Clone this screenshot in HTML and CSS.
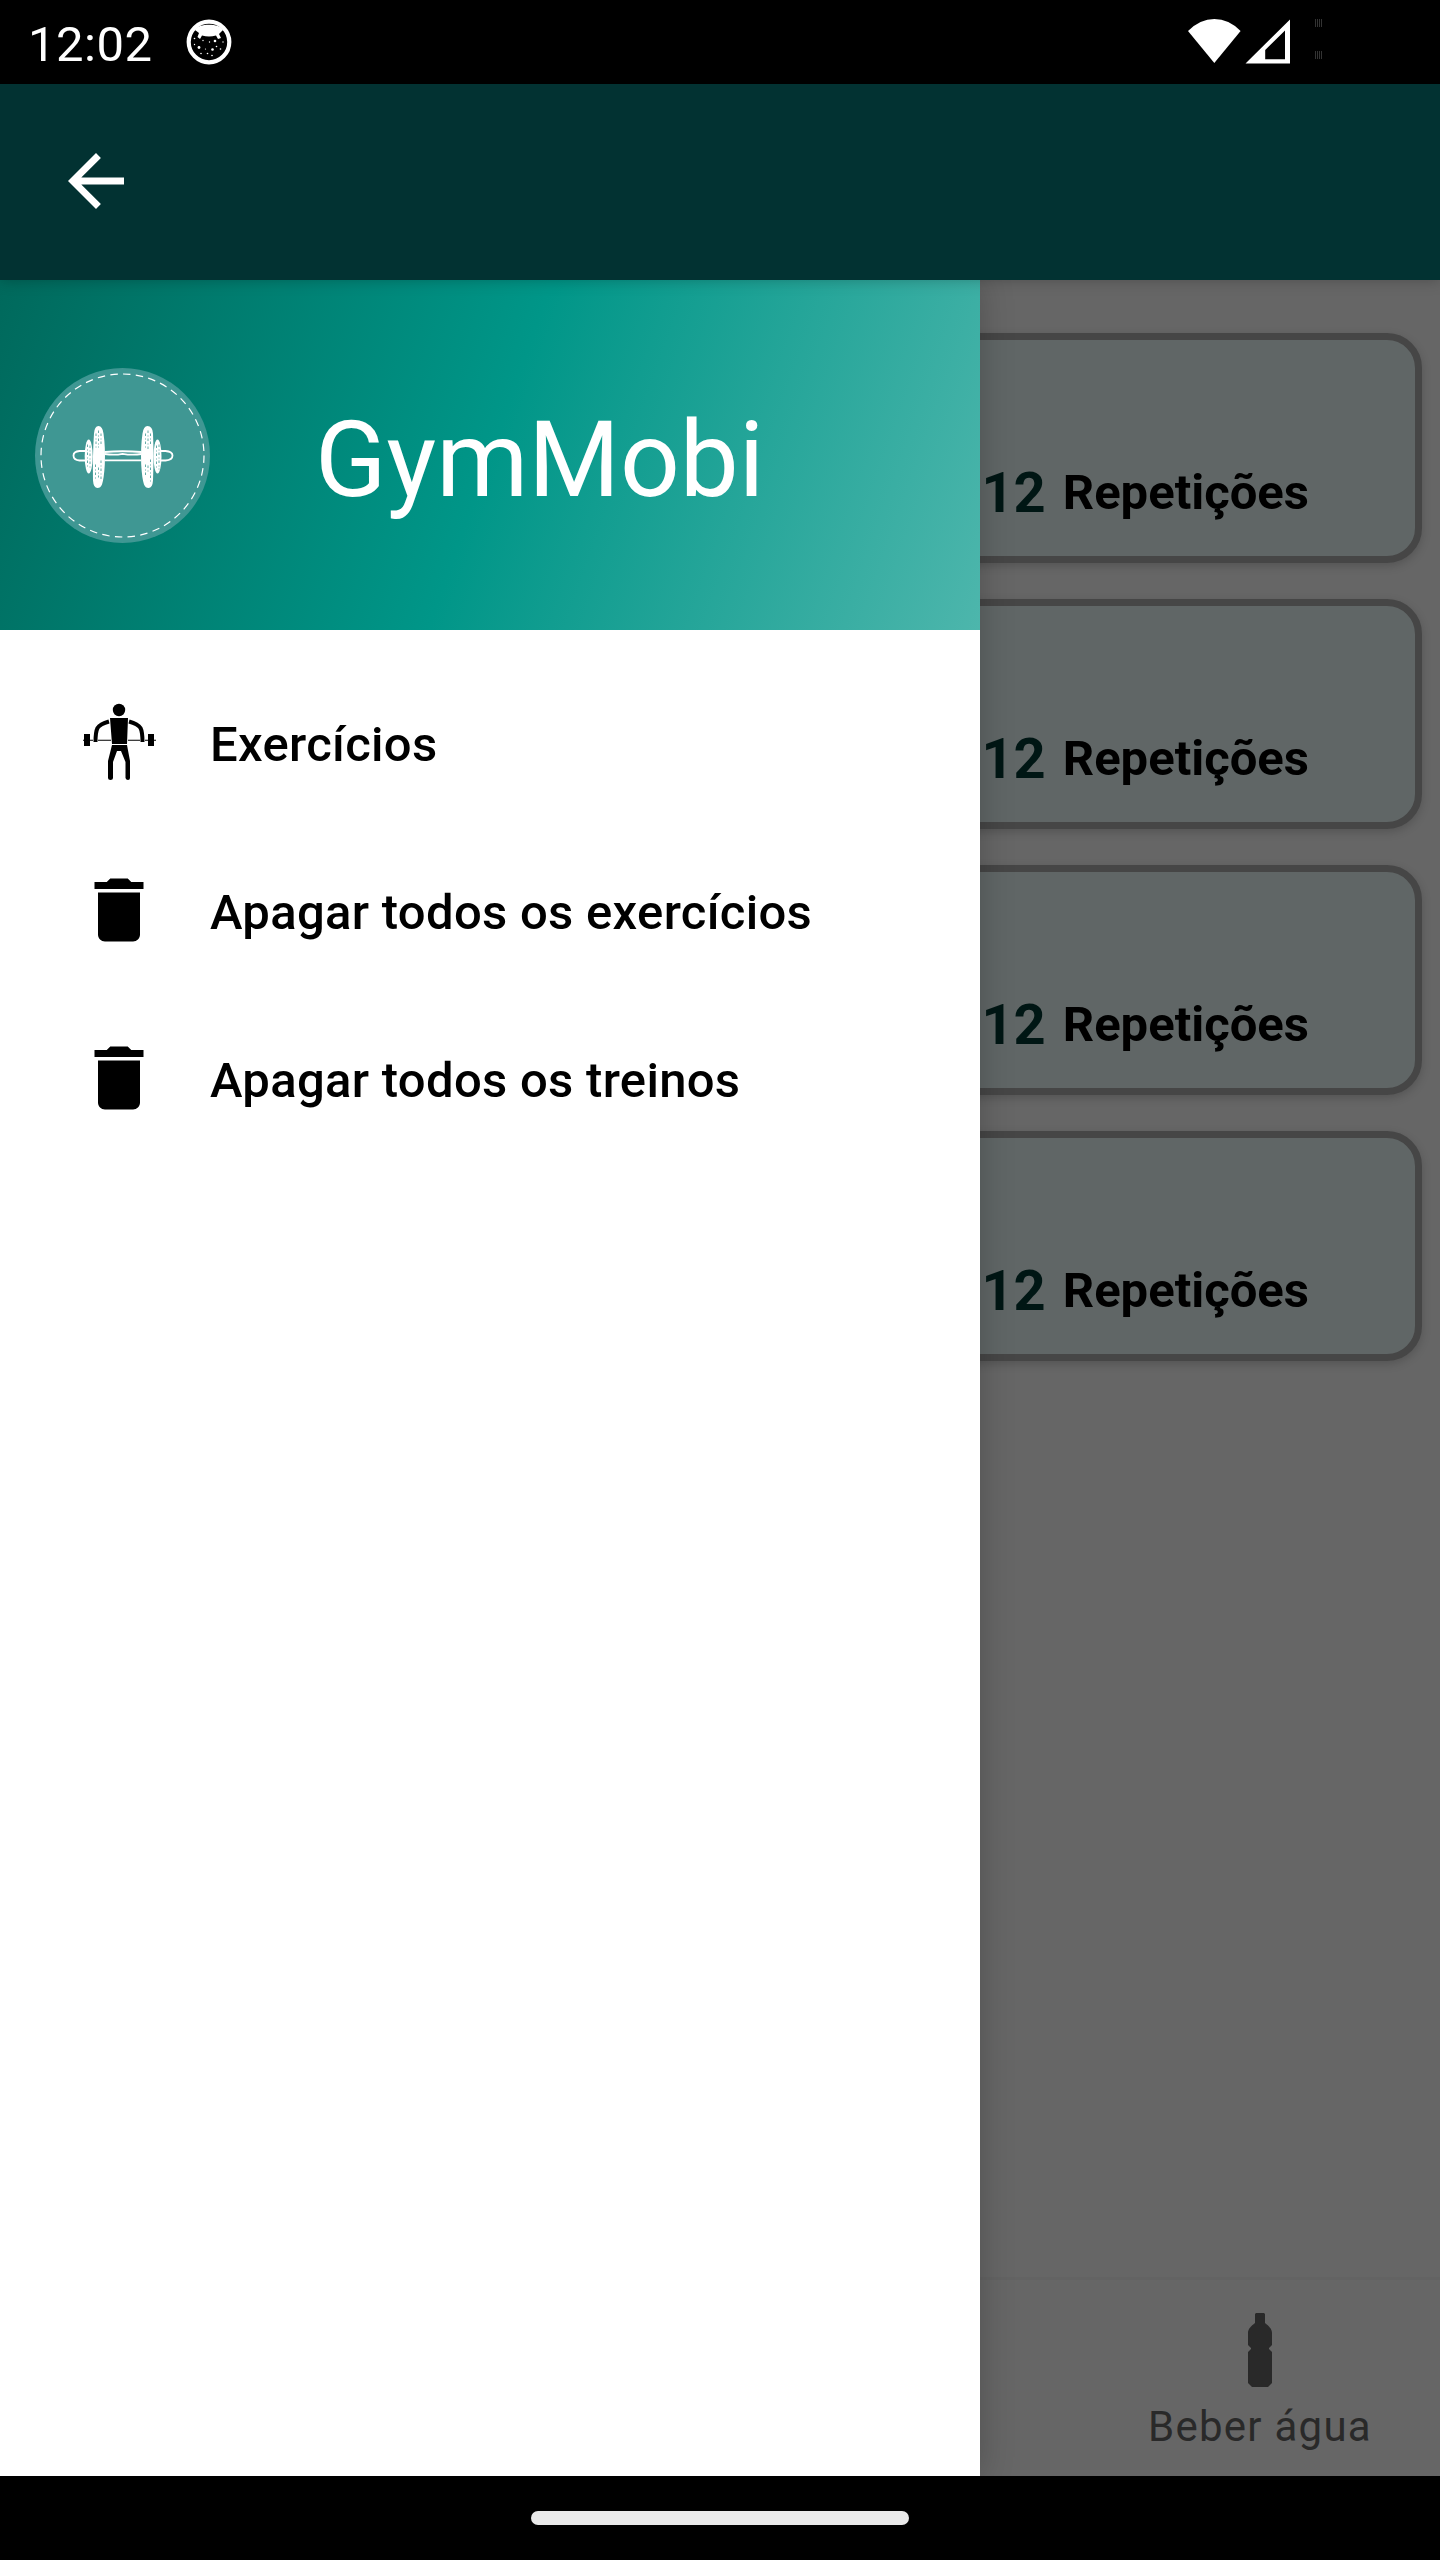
FILE: index.html
```html
<!DOCTYPE html>
<html lang="pt-BR">
<head>
<meta charset="utf-8">
<title>GymMobi</title>
<link rel="stylesheet" href="styles.css">
</head>
<body>
<div class="screen">
  <header class="status">
    <span class="clock">12:02</span>
    <svg class="notify" viewBox="0 0 46 46" width="46" height="46">
      <circle cx="23" cy="23" r="20.3" fill="none" stroke="#fff" stroke-width="4.2"/>
      <path d="M9 11C12 4 34 4 37 11L33 15L35 19L32 20L30 16.500Q23 18.500 16 16.500L14 20L11.500 18L13 14Z" fill="#fff"/>
      <g fill="#fff"><circle cx="13" cy="28.500" r="1.400"/><circle cx="26.500" cy="30.500" r="1.300"/><circle cx="29" cy="22" r="1.300"/><circle cx="8.500" cy="19.500" r=".8"/><circle cx="17" cy="21.500" r=".7"/><circle cx="23.500" cy="23" r=".7"/><circle cx="37" cy="23" r=".7"/><circle cx="19.500" cy="30" r=".6"/><circle cx="15" cy="34.500" r=".8"/><circle cx="21.500" cy="34.500" r=".8"/><circle cx="26" cy="36.500" r=".8"/><circle cx="34.500" cy="30" r=".8"/><circle cx="30.500" cy="27.500" r=".8"/><circle cx="8.500" cy="25.500" r=".7"/></g>
    </svg>
    <svg class="signals" viewBox="0 0 142 50" width="142" height="50">
      <path d="M0 15Q12 3 26.300 3Q41 3 52.600 15L26.300 47Z" fill="#fff"/>
      <path fill-rule="evenodd" d="M57.500 47.500L102 3.500V47.500ZM77.200 34V43.300H97V14.500Z" fill="#fff"/>
      <path d="M127.500 3v8m2-8v8m2-8v8m2-8v8m-6 24v8m2-8v8m2-8v8m2-8v8" stroke="#333" stroke-width="1"/>
    </svg>
  </header>
  <div class="toolbar">
    <svg viewBox="0 0 24 24" width="84" height="84"><path fill="#fff" d="M20 11H7.800l5.600-5.600L12 4l-8 8 8 8 1.400-1.400L7.800 13H20z"/></svg>
  </div>
  <main class="body">
    <section class="content">
      <div class="cards">
        <article class="card"><b class="count">12</b><span class="unit">Repetições</span></article>
        <article class="card"><b class="count">12</b><span class="unit">Repetições</span></article>
        <article class="card"><b class="count">12</b><span class="unit">Repetições</span></article>
        <article class="card"><b class="count">12</b><span class="unit">Repetições</span></article>
      </div>
      <nav class="bottom">
        <a class="tab">
          <svg viewBox="0 0 24 74" width="24" height="74"><path fill="#292929" d="M8 0H16L17 1V10C21 13 24 16 24 20V32L21 35V36L24 39V70L20 74H4L0 70V39L3 36V35L0 32V20C0 16 3 13 7 10V1Z"/></svg>
          <span>Beber água</span>
        </a>
      </nav>
    </section>
    <aside class="drawer">
      <div class="brand">
        <svg class="logo" viewBox="0.5 0.5 175 175" width="175" height="175">
          <circle cx="88" cy="88" r="87.500" fill="#3f9793"/>
          <circle cx="88" cy="88" r="81.500" fill="none" stroke="#fff" stroke-width="1.200" stroke-dasharray="7.500 5.300"/>
          <g fill="none" stroke="#fff" stroke-width="1.800">
            <path d="M70 84.500Q88 83 107 84.500M70 92.800H107M51 83.500H45Q39 84 39 88Q39 92.500 45 93H51M126 83.500H131Q138 84 138 88Q138 92.500 131 93H126"/>
            <path d="M70 86.500Q80 88 88 86.300Q98 88 107 86.500"/>
          </g>
          <g fill="#fff">
            <ellipse cx="54.200" cy="89" rx="4" ry="17"/><ellipse cx="123" cy="89" rx="4" ry="17"/>
            <path d="M64 58.500Q68 58.500 69 66Q71 80 70.300 97Q69.500 111 67.500 117Q66 120.500 63 120.500Q59 120.500 58.500 113Q58 88 59.500 66Q60 58.500 64 58.500Z"/>
            <path d="M113 58.500Q109 58.500 108 66Q106 80 106.700 97Q107.500 111 109.500 117Q111 120.500 114 120.500Q118 120.500 118.500 113Q119.500 88 118.500 66Q118 58.500 113 58.500Z"/>
          </g>
          <path fill="none" stroke="#3f9793" stroke-width=".8" stroke-dasharray="2.500 2.500 1 2" d="M61.500 66V80M64 63V80M66.500 66V79M61 97V112M66.500 93V112M64 100V110M53 77V101M55.500 78V102M111 66V80M113.500 63V82M116 66V78M111 97V110M116 92V114M113.500 98V106M122 78V101M124.500 77V102"/>
        </svg>
        <h1>GymMobi</h1>
      </div>
      <ul class="menu">
        <li>
          <svg viewBox="0 0 84 84" width="84" height="84">
            <circle cx="42" cy="10" r="6.200"/>
            <path d="M33 18H51L50 44H35ZM35 45H50L53 61V78Q53 80 51 80T48.500 78V62L44 51H40L36 62V78Q36 80 33.500 80T31 78V61Z"/>
            <path d="M32 21.500Q23 24 20.500 28Q18.500 32 18.500 42M52 21.500Q61 24 63.500 28Q65.500 32 65.500 42" fill="none" stroke="#000" stroke-width="4"/>
            <path d="M7 34h6v12H7zM71 34h6v12h-6zM6 39.700h10v1H6zM21 39.700h13v1H21zM51 39.700h12v1H51zM68 39.700h11v1H68z"/>
          </svg>
          <span>Exercícios</span>
        </li>
        <li>
          <svg viewBox="0 0 24 24" width="84" height="84"><path d="M6 19c0 1.100.9 2 2 2h8c1.100 0 2-.9 2-2V7H6v12zM19 4h-3.500l-1-1h-5l-1 1H5v2h14V4z"/></svg>
          <span>Apagar todos os exercícios</span>
        </li>
        <li>
          <svg viewBox="0 0 24 24" width="84" height="84"><path d="M6 19c0 1.100.9 2 2 2h8c1.100 0 2-.9 2-2V7H6v12zM19 4h-3.500l-1-1h-5l-1 1H5v2h14V4z"/></svg>
          <span>Apagar todos os treinos</span>
        </li>
      </ul>
    </aside>
  </main>
  <footer class="gesture"><i></i></footer>
</div>
</body>
</html>
```
FILE: styles.css
```css
* { box-sizing: border-box; margin: 0; padding: 0; }
body { font-family: Roboto, sans-serif; background: #000; }
svg { display: block; flex: none; }
.screen { width: 1440px; height: 2560px; display: flex; flex-direction: column; overflow: hidden; }
.status { height: 84px; flex: none; display: flex; align-items: flex-start; background: #000; color: #fff; padding-left: 28px; }
.clock { font-size: 49px; line-height: 58px; padding-top: 16px; width: 158px; letter-spacing: .5px; }
.notify { margin-top: 19px; }
.signals { margin: 16px 0 0 956px; }
.toolbar { height: 196px; flex: none; display: flex; align-items: center; padding: 0 0 3px 54px; background: #023232; box-shadow: 0 0 14px rgba(0,0,0,.25); position: relative; z-index: 2; }
.body { height: 2196px; flex: none; display: grid; grid-template-columns: 1440px; overflow: hidden; }
.content, .drawer { grid-row: 1; grid-column: 1; }
.content { background: #666; display: flex; flex-direction: column; justify-content: space-between; }
.cards { padding: 53px 18px 0; display: flex; flex-direction: column; gap: 36px; }
.card { height: 230px; border: 7px solid #464646; border-radius: 35px; background: #606666; display: flex; justify-content: flex-end; align-items: flex-start; padding: 120px 106px 0 0; box-shadow: 0 3px 10px rgba(0,0,0,.18); }
.count { font-size: 56px; line-height: 66px; font-weight: 700; color: #001614; margin-right: 17px; }
.unit { font-size: 49px; line-height: 58px; font-weight: 700; color: #000; margin-top: 4px; }
.bottom { height: 199px; border-top: 3px solid #636363; display: flex; justify-content: flex-end; }
.tab { width: 360px; display: flex; flex-direction: column; align-items: center; padding-top: 33px; gap: 15px; color: #292929; font-size: 42px; line-height: 50px; letter-spacing: 1.25px; }
.drawer { width: 980px; background: #fff; box-shadow: 0 0 32px rgba(0,0,0,.22); z-index: 1; }
.brand { height: 350px; display: flex; align-items: center; padding-left: 35px; background: linear-gradient(109.65deg, #00695c, #009688 50%, #4db6ac); }
.brand h1 { font-size: 105px; line-height: 124px; font-weight: 400; color: #fff; margin-left: 105px; padding-top: 12px; }
.menu { list-style: none; padding-top: 28px; }
.menu li { height: 168px; display: flex; align-items: center; padding-left: 77px; gap: 49px; font-size: 49px; font-weight: 500; line-height: 58px; letter-spacing: .3px; color: #000; }
.menu span { padding-top: 5px; }
.gesture { height: 84px; flex: none; background: #000; display: flex; justify-content: center; padding-top: 35px; }
.gesture i { width: 378px; height: 14px; border-radius: 7px; background: #eaeaea; }
```
